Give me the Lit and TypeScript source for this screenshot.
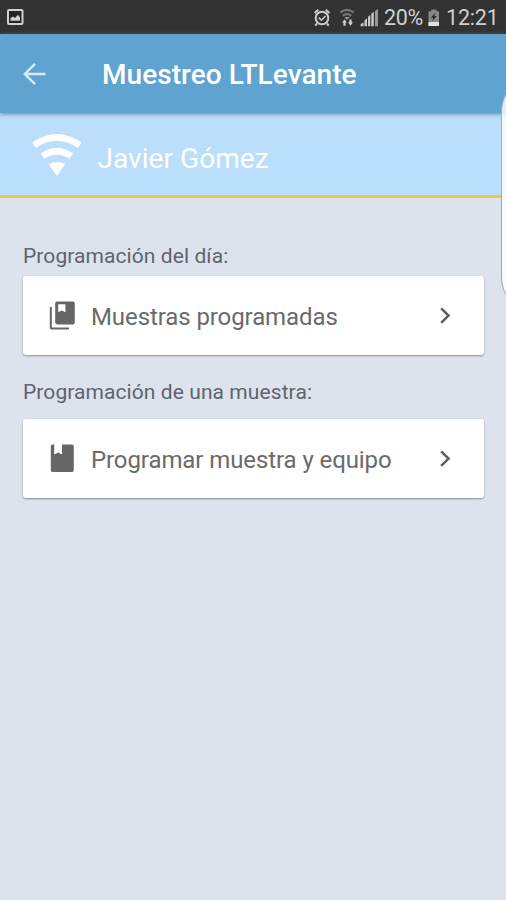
import { LitElement, html, css, svg } from "lit";
import { customElement, property } from "lit/decorators.js";

const cardIcons = {
  collection: svg`
    <path d="M2.8 7V27.4Q2.8 28.4 3.8 28.4H21" fill="none" stroke="#666" stroke-width="2"/>
    <path fill-rule="evenodd" d="M9 1.6H25Q26.8 1.6 26.8 3.4V22.6Q26.8 24.4 25 24.4H9Q7.2 24.4 7.2 22.6V3.4Q7.2 1.6 9 1.6ZM10.2 4.3V12.3L13.7 10.4L17.4 12.3V4.3Z"/>`,
  book: svg`
    <path d="M4.5 1.4H6.2V11.4L10.4 9.4L14 11.4V1.4H24.1Q25.8 1.4 25.8 3.1V27.2Q25.8 28.9 24.1 28.9H4.5Q2.8 28.9 2.8 27.2V3.1Q2.8 1.4 4.5 1.4Z"/>`,
};

@customElement("status-bar")
class StatusBar extends LitElement {
  static styles = css`
    :host { display: flex; height: 34px; box-sizing: border-box; background: #323232; border-bottom: 1px solid #35291f; align-items: center; }
    svg { display: block; flex: none; }
    .shot { margin-left: 6px; margin-top: 1px; }
    .space { flex: 1; }
    .signals { margin-right: 3px; }
    .text { font: 400 21.5px/34px Roboto, sans-serif; color: #d0d0d0; white-space: nowrap; position: relative; top: 1px; }
    .percent { width: 41px; letter-spacing: -0.35px; }
    .time { width: 60px; letter-spacing: -0.2px; }
  `;
  render() {
    return html`
      <svg class="shot" width="18" height="18" viewBox="0 0 18 18">
        <rect x="2" y="2" width="14.5" height="14" rx="1" fill="#242424" stroke="#d2d2d2" stroke-width="2"/>
        <path d="M4.5 12.8V10L7 8.5L9 10L12 6.8L14 9.5V12.8Z" fill="#d2d2d2"/>
      </svg>
      <div class="space"></div>
      <svg class="signals" width="69" height="34" viewBox="312 0 69 34">
        <g fill="none" stroke="#cecece" stroke-width="2">
          <circle cx="322" cy="18" r="6.3"/>
          <path d="M314.6 13L318.3 9.8M325.7 9.8L329.4 13M317 23.5L315.3 25.6M327 23.5L328.7 25.6"/>
          <path d="M318.8 17.6L321.4 20.2L325.5 16" stroke-width="1.6"/>
        </g>
        <g fill="none" stroke="#777" stroke-width="2.2">
          <path d="M340.3 12.5Q347 7.3 353.7 12.5M342.8 15.8Q347 12.5 351.2 15.8"/>
        </g>
        <path d="M344.4 17H349.6L347 20Z" fill="#999"/>
        <path d="M342 22.5L344.5 19.5L347 22.5H345.6V25.7H343.4V22.5ZM348 22.3H349.4V19.5H351.6V22.3H353L350.5 25.7Z" fill="#d0d0d0"/>
        <path d="M360.7 26.2V24L363.6 22.6V26.2ZM364.5 26.2V20.2L367 18.3V26.2ZM368 26.2V16.8L370.3 14.8V26.2ZM371.3 26.2V13.8L373.8 11.8V26.2Z" fill="#c8c8c8"/>
        <path d="M375 26.2V11L378 9V26.2Z" fill="#999"/>
      </svg>
      <div class="text percent">20%</div>
      <svg width="21" height="34" viewBox="425 0 21 34">
        <path d="M431.3 9.5H436.4V11.2H439V26H428.5V11.2H431.3Z" fill="#888"/>
        <path d="M428.5 22H439V26H428.5Z" fill="#e0e0e0"/>
        <path d="M435.4 12.4L430.8 17.8H433.3L432.2 21.3L436.8 16H434.2Z" fill="#292929"/>
      </svg>
      <div class="text time">12:21</div>`;
  }
}

@customElement("option-card")
class OptionCard extends LitElement {
  @property() label = "";
  @property() icon: keyof typeof cardIcons = "book";
  static styles = css`
    :host { display: flex; align-items: center; height: 79px; border-radius: 3px; background: #fff; box-shadow: 0 1px 2px #878e9c; }
    svg { display: block; flex: none; }
    .icon { margin-left: 25px; fill: #666; position: relative; top: -1px; }
    .label { flex: 1; margin-left: 13px; font: 400 24px/32px Roboto, sans-serif; color: #6a6a6a; letter-spacing: -0.09px; white-space: nowrap; position: relative; top: 1px; }
    .chevron { margin-right: 32px; position: relative; top: -1px; }
  `;
  render() {
    return html`
      <svg class="icon" width="30" height="30" viewBox="0 0 30 30">${cardIcons[this.icon]}</svg>
      <span class="label">${this.label}</span>
      <svg class="chevron" width="14" height="20" viewBox="0 0 14 20">
        <path d="M3.2 3.3L10.5 10.6L3.2 17.9" fill="none" stroke="#606060" stroke-width="2.6"/>
      </svg>`;
  }
}

@customElement("app-root")
class AppRoot extends LitElement {
  static styles = css`
    :host { display: flex; flex-direction: column; position: relative; height: 900px; overflow: hidden; background: #dde3ed; font-family: Roboto, sans-serif; }
    svg { display: block; flex: none; }
    .toolbar { display: flex; align-items: center; height: 79px; flex: none; background: #5fa3d0; box-shadow: 0 1px 4px #64879c; z-index: 1; }
    .back { margin-left: 22px; }
    .title { margin: 3px 0 0 54px; font-size: 28px; line-height: 36px; font-weight: 500; letter-spacing: 0.05px; color: #fff; white-space: nowrap; }
    .user { display: flex; align-items: center; height: 85px; box-sizing: border-box; flex: none; background: #badefb; border-bottom: 3px solid #f2c83c; }
    .wifi { margin-left: 30px; }
    .name { margin: 10px 0 0 13.5px; font-size: 28px; line-height: 36px; letter-spacing: 0.06px; color: #fff; white-space: nowrap; }
    .content { display: flex; flex-direction: column; padding: 43px 22px 0 23px; }
    .caption { font-size: 21px; line-height: 30px; letter-spacing: 0.08px; color: #60646c; white-space: nowrap; }
    .first { margin-top: 5px; }
    .second { margin-top: 22px; }
    .second + option-card { margin-top: 12px; }
    .handle { position: absolute; z-index: 2; left: 501px; top: 89px; width: 30px; height: 211px; box-sizing: border-box; border: 1px solid #a3aab4; border-radius: 12px / 24px; background: rgba(255, 255, 255, 0.82); }
  `;
  render() {
    return html`
      <status-bar></status-bar>
      <header class="toolbar">
        <svg class="back" width="26" height="26" viewBox="0 0 26 26">
          <path d="M23.5 13H2.8M13 2.8L2.8 13L13 23.2" fill="none" stroke="#d5edfb" stroke-width="2.4"/>
        </svg>
        <div class="title">Muestreo LTLevante</div>
      </header>
      <section class="user">
        <svg class="wifi" width="54" height="46" viewBox="0 0 54 46">
          <g fill="none" stroke="#fff" stroke-width="6.6">
            <path d="M4 14.2Q26.9 -1.6 49.8 14.2"/>
            <path d="M12.5 25Q26.9 15.7 41.3 25"/>
          </g>
          <path d="M18.4 33Q26.9 29.2 35.2 33L27 45Z" fill="#fff"/>
        </svg>
        <div class="name">Javier Gómez</div>
      </section>
      <main class="content">
        <div class="caption">Programación del día:</div>
        <option-card class="first" icon="collection" label="Muestras programadas"></option-card>
        <div class="caption second">Programación de una muestra:</div>
        <option-card icon="book" label="Programar muestra y equipo"></option-card>
      </main>
      <div class="handle"></div>`;
  }
}
